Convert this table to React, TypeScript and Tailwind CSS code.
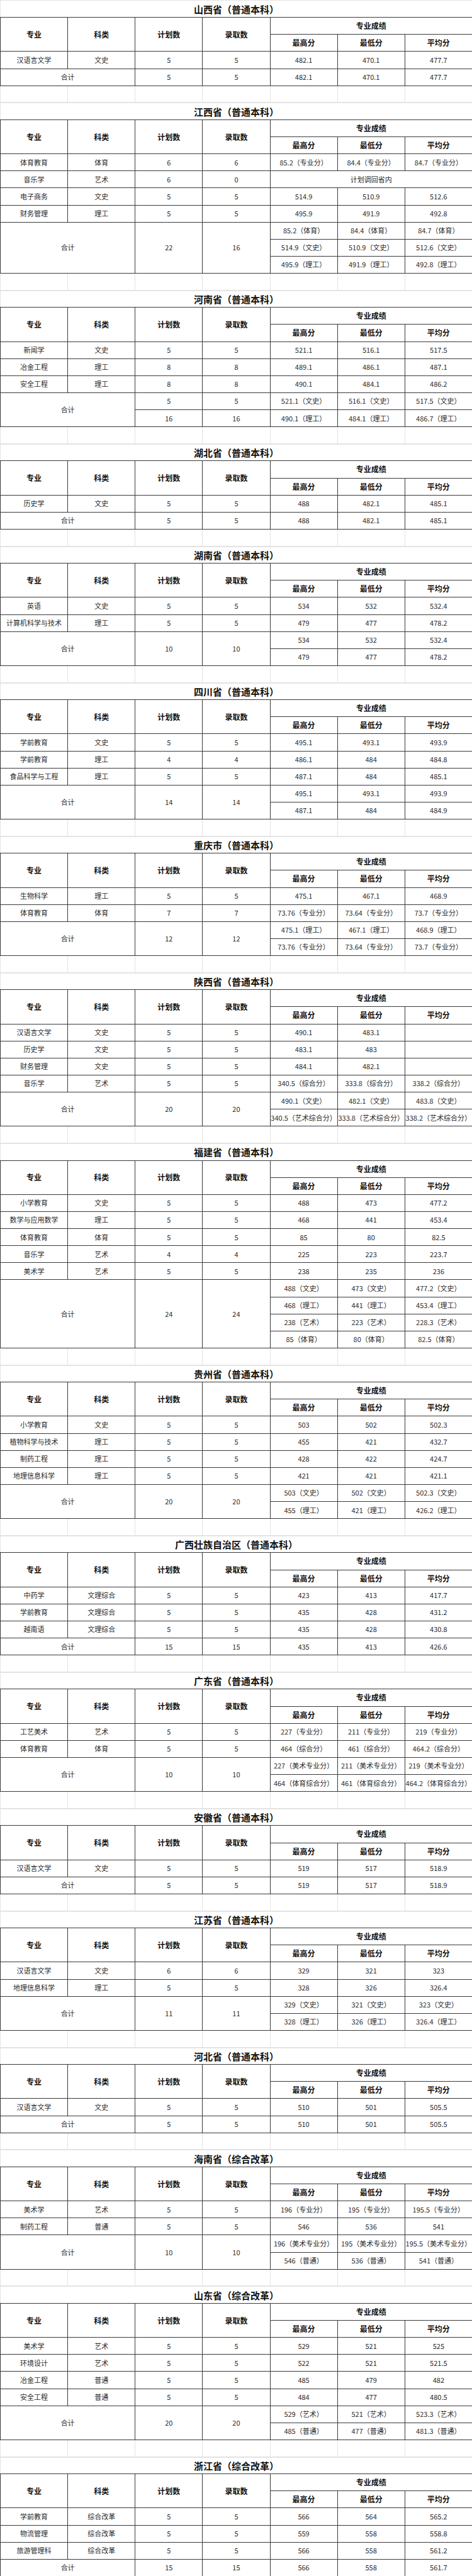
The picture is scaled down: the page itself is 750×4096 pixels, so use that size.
import React from 'react';

type Row = { major: string; kind: string; plan: string; admit: string; scores: string[] | string };
type TotalLine = { plan?: string; admit?: string; scores: string[] };
type Total = { plan?: string; admit?: string; lines: TotalLine[] };
type Section = { title: string; rows: Row[]; total: Total };

const r = (major: string, kind: string, plan: string, admit: string, scores: string[] | string): Row => ({
  major,
  kind,
  plan,
  admit,
  scores,
});

const sections: Section[] = [
  {
    title: '山西省（普通本科）',
    rows: [r('汉语言文学', '文史', '5', '5', ['482.1', '470.1', '477.7'])],
    total: { plan: '5', admit: '5', lines: [{ scores: ['482.1', '470.1', '477.7'] }] },
  },
  {
    title: '江西省（普通本科）',
    rows: [
      r('体育教育', '体育', '6', '6', ['85.2（专业分）', '84.4（专业分）', '84.7（专业分）']),
      r('音乐学', '艺术', '6', '0', '计划调回省内'),
      r('电子商务', '文史', '5', '5', ['514.9', '510.9', '512.6']),
      r('财务管理', '理工', '5', '5', ['495.9', '491.9', '492.8']),
    ],
    total: {
      plan: '22',
      admit: '16',
      lines: [
        { scores: ['85.2（体育）', '84.4（体育）', '84.7（体育）'] },
        { scores: ['514.9（文史）', '510.9（文史）', '512.6（文史）'] },
        { scores: ['495.9（理工）', '491.9（理工）', '492.8（理工）'] },
      ],
    },
  },
  {
    title: '河南省（普通本科）',
    rows: [
      r('新闻学', '文史', '5', '5', ['521.1', '516.1', '517.5']),
      r('冶金工程', '理工', '8', '8', ['489.1', '486.1', '487.1']),
      r('安全工程', '理工', '8', '8', ['490.1', '484.1', '486.2']),
    ],
    total: {
      lines: [
        { plan: '5', admit: '5', scores: ['521.1（文史）', '516.1（文史）', '517.5（文史）'] },
        { plan: '16', admit: '16', scores: ['490.1（理工）', '484.1（理工）', '486.7（理工）'] },
      ],
    },
  },
  {
    title: '湖北省（普通本科）',
    rows: [r('历史学', '文史', '5', '5', ['488', '482.1', '485.1'])],
    total: { plan: '5', admit: '5', lines: [{ scores: ['488', '482.1', '485.1'] }] },
  },
  {
    title: '湖南省（普通本科）',
    rows: [
      r('英语', '文史', '5', '5', ['534', '532', '532.4']),
      r('计算机科学与技术', '理工', '5', '5', ['479', '477', '478.2']),
    ],
    total: {
      plan: '10',
      admit: '10',
      lines: [{ scores: ['534', '532', '532.4'] }, { scores: ['479', '477', '478.2'] }],
    },
  },
  {
    title: '四川省（普通本科）',
    rows: [
      r('学前教育', '文史', '5', '5', ['495.1', '493.1', '493.9']),
      r('学前教育', '理工', '4', '4', ['486.1', '484', '484.8']),
      r('食品科学与工程', '理工', '5', '5', ['487.1', '484', '485.1']),
    ],
    total: {
      plan: '14',
      admit: '14',
      lines: [{ scores: ['495.1', '493.1', '493.9'] }, { scores: ['487.1', '484', '484.9'] }],
    },
  },
  {
    title: '重庆市（普通本科）',
    rows: [
      r('生物科学', '理工', '5', '5', ['475.1', '467.1', '468.9']),
      r('体育教育', '体育', '7', '7', ['73.76（专业分）', '73.64（专业分）', '73.7（专业分）']),
    ],
    total: {
      plan: '12',
      admit: '12',
      lines: [
        { scores: ['475.1（理工）', '467.1（理工）', '468.9（理工）'] },
        { scores: ['73.76（专业分）', '73.64（专业分）', '73.7（专业分）'] },
      ],
    },
  },
  {
    title: '陕西省（普通本科）',
    rows: [
      r('汉语言文学', '文史', '5', '5', ['490.1', '483.1', '']),
      r('历史学', '文史', '5', '5', ['483.1', '483', '']),
      r('财务管理', '文史', '5', '5', ['484.1', '482.1', '']),
      r('音乐学', '艺术', '5', '5', ['340.5（综合分）', '333.8（综合分）', '338.2（综合分）']),
    ],
    total: {
      plan: '20',
      admit: '20',
      lines: [
        { scores: ['490.1（文史）', '482.1（文史）', '483.8（文史）'] },
        { scores: ['340.5（艺术综合分）', '333.8（艺术综合分）', '338.2（艺术综合分）'] },
      ],
    },
  },
  {
    title: '福建省（普通本科）',
    rows: [
      r('小学教育', '文史', '5', '5', ['488', '473', '477.2']),
      r('数学与应用数学', '理工', '5', '5', ['468', '441', '453.4']),
      r('体育教育', '体育', '5', '5', ['85', '80', '82.5']),
      r('音乐学', '艺术', '4', '4', ['225', '223', '223.7']),
      r('美术学', '艺术', '5', '5', ['238', '235', '236']),
    ],
    total: {
      plan: '24',
      admit: '24',
      lines: [
        { scores: ['488（文史）', '473（文史）', '477.2（文史）'] },
        { scores: ['468（理工）', '441（理工）', '453.4（理工）'] },
        { scores: ['238（艺术）', '223（艺术）', '228.3（艺术）'] },
        { scores: ['85（体育）', '80（体育）', '82.5（体育）'] },
      ],
    },
  },
  {
    title: '贵州省（普通本科）',
    rows: [
      r('小学教育', '文史', '5', '5', ['503', '502', '502.3']),
      r('植物科学与技术', '理工', '5', '5', ['455', '421', '432.7']),
      r('制药工程', '理工', '5', '5', ['428', '422', '424.7']),
      r('地理信息科学', '理工', '5', '5', ['421', '421', '421.1']),
    ],
    total: {
      plan: '20',
      admit: '20',
      lines: [
        { scores: ['503（文史）', '502（文史）', '502.3（文史）'] },
        { scores: ['455（理工）', '421（理工）', '426.2（理工）'] },
      ],
    },
  },
  {
    title: '广西壮族自治区（普通本科）',
    rows: [
      r('中药学', '文理综合', '5', '5', ['423', '413', '417.7']),
      r('学前教育', '文理综合', '5', '5', ['435', '428', '431.2']),
      r('越南语', '文理综合', '5', '5', ['435', '428', '430.8']),
    ],
    total: { plan: '15', admit: '15', lines: [{ scores: ['435', '413', '426.6'] }] },
  },
  {
    title: '广东省（普通本科）',
    rows: [
      r('工艺美术', '艺术', '5', '5', ['227（专业分）', '211（专业分）', '219（专业分）']),
      r('体育教育', '体育', '5', '5', ['464（综合分）', '461（综合分）', '464.2（综合分）']),
    ],
    total: {
      plan: '10',
      admit: '10',
      lines: [
        { scores: ['227（美术专业分）', '211（美术专业分）', '219（美术专业分）'] },
        { scores: ['464（体育综合分）', '461（体育综合分）', '464.2（体育综合分）'] },
      ],
    },
  },
  {
    title: '安徽省（普通本科）',
    rows: [r('汉语言文学', '文史', '5', '5', ['519', '517', '518.9'])],
    total: { plan: '5', admit: '5', lines: [{ scores: ['519', '517', '518.9'] }] },
  },
  {
    title: '江苏省（普通本科）',
    rows: [
      r('汉语言文学', '文史', '6', '6', ['329', '321', '323']),
      r('地理信息科学', '理工', '5', '5', ['328', '326', '326.4']),
    ],
    total: {
      plan: '11',
      admit: '11',
      lines: [
        { scores: ['329（文史）', '321（文史）', '323（文史）'] },
        { scores: ['328（理工）', '326（理工）', '326.4（理工）'] },
      ],
    },
  },
  {
    title: '河北省（普通本科）',
    rows: [r('汉语言文学', '文史', '5', '5', ['510', '501', '505.5'])],
    total: { plan: '5', admit: '5', lines: [{ scores: ['510', '501', '505.5'] }] },
  },
  {
    title: '海南省（综合改革）',
    rows: [
      r('美术学', '艺术', '5', '5', ['196（专业分）', '195（专业分）', '195.5（专业分）']),
      r('制药工程', '普通', '5', '5', ['546', '536', '541']),
    ],
    total: {
      plan: '10',
      admit: '10',
      lines: [
        { scores: ['196（美术专业分）', '195（美术专业分）', '195.5（美术专业分）'] },
        { scores: ['546（普通）', '536（普通）', '541（普通）'] },
      ],
    },
  },
  {
    title: '山东省（综合改革）',
    rows: [
      r('美术学', '艺术', '5', '5', ['529', '521', '525']),
      r('环境设计', '艺术', '5', '5', ['522', '521', '521.5']),
      r('冶金工程', '普通', '5', '5', ['485', '479', '482']),
      r('安全工程', '普通', '5', '5', ['484', '477', '480.5']),
    ],
    total: {
      plan: '20',
      admit: '20',
      lines: [
        { scores: ['529（艺术）', '521（艺术）', '523.3（艺术）'] },
        { scores: ['485（普通）', '477（普通）', '481.3（普通）'] },
      ],
    },
  },
  {
    title: '浙江省（综合改革）',
    rows: [
      r('学前教育', '综合改革', '5', '5', ['566', '564', '565.2']),
      r('物流管理', '综合改革', '5', '5', ['559', '558', '558.8']),
      r('旅游管理科', '综合改革', '5', '5', ['566', '558', '561.2']),
    ],
    total: { plan: '15', admit: '15', lines: [{ scores: ['566', '558', '561.7'] }] },
  },
];

// shared cell styles
const cell = 'border border-[#3a3a3a] p-0 text-center align-middle whitespace-nowrap text-[11px] leading-none text-[#2a2a2a]';
const head = 'border border-[#3a3a3a] p-0 text-center align-middle whitespace-nowrap text-[12px] leading-none font-bold text-[#111]';
const tr = 'h-[27.125px]';

const SectionRows = ({ s, first, last }: { s: Section; first: boolean; last: boolean }) => {
  const { total } = s;
  const span = total.lines.length;

  return (
    <>
      {/* Title */}
      <tr className={tr}>
        <td
          colSpan={7}
          className={`${first ? 'border-t' : 'border-t-2'} border-x border-[#e3e3e3] border-b border-b-[#3a3a3a] p-0 text-center align-middle text-[15px] leading-none font-bold text-[#111]`}
        >
          {s.title}
        </td>
      </tr>

      {/* Header */}
      <tr className={tr}>
        <td rowSpan={2} className={head}>专业</td>
        <td rowSpan={2} className={head}>科类</td>
        <td rowSpan={2} className={head}>计划数</td>
        <td rowSpan={2} className={head}>录取数</td>
        <td colSpan={3} className={head}>专业成绩</td>
      </tr>
      <tr className={tr}>
        <td className={head}>最高分</td>
        <td className={head}>最低分</td>
        <td className={head}>平均分</td>
      </tr>

      {/* Data rows */}
      {s.rows.map((row, i) => (
        <tr key={i} className={tr}>
          <td className={cell}>{row.major}</td>
          <td className={cell}>{row.kind}</td>
          <td className={cell}>{row.plan}</td>
          <td className={cell}>{row.admit}</td>
          {typeof row.scores === 'string' ? (
            <td colSpan={3} className={cell}>{row.scores}</td>
          ) : (
            row.scores.map((v, j) => (
              <td key={j} className={cell}>{v}</td>
            ))
          )}
        </tr>
      ))}

      {/* Total */}
      {total.lines.map((line, i) => (
        <tr key={`t${i}`} className={tr}>
          {i === 0 && (
            <td colSpan={2} rowSpan={span} className={cell}>合计</td>
          )}
          {total.plan !== undefined ? (
            i === 0 && (
              <>
                <td rowSpan={span} className={cell}>{total.plan}</td>
                <td rowSpan={span} className={cell}>{total.admit}</td>
              </>
            )
          ) : (
            <>
              <td className={cell}>{line.plan}</td>
              <td className={cell}>{line.admit}</td>
            </>
          )}
          {line.scores.map((v, j) => (
            <td key={j} className={cell}>{v}</td>
          ))}
        </tr>
      ))}

      {/* Blank spacer row */}
      {!last && (
        <tr className={tr}>
          {Array.from({ length: 7 }).map((_, j) => (
            <td key={j} className="border-x border-[#e3e3e3] p-0" />
          ))}
        </tr>
      )}
    </>
  );
};

export default function App() {
  return (
    <div className="w-[750px] bg-white" style={{ fontFamily: '"Noto Sans CJK SC", "Noto Sans", sans-serif' }}>
      <table className="w-[750px] table-fixed border-collapse">
        <colgroup>
          {Array.from({ length: 7 }).map((_, i) => (
            <col key={i} className="w-[107.14px]" />
          ))}
        </colgroup>
        <tbody>
          {sections.map((s, i) => (
            <SectionRows key={s.title} s={s} first={i === 0} last={i === sections.length - 1} />
          ))}
        </tbody>
      </table>
    </div>
  );
}
